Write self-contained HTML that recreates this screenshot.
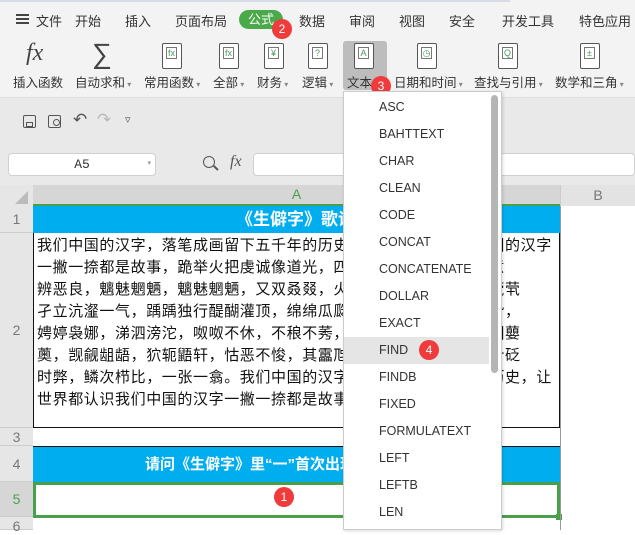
<!DOCTYPE html><html><head><meta charset="utf-8"><style>
*{margin:0;padding:0;box-sizing:border-box}
body{width:635px;height:530px;overflow:hidden;background:#fff;font-family:"Liberation Sans","Noto Sans CJK SC",sans-serif;position:relative;color:#333}
.a{position:absolute}
.tab{position:absolute;top:11px;font-size:13px;color:#333}
.lbl{position:absolute;top:72px;font-size:12.5px;color:#333;white-space:nowrap}
.ic{position:absolute;top:43px;width:20px;height:26px;border:1.5px solid #555;border-radius:2px;background:#fff}
.ic i{position:absolute;left:3px;top:3px;width:11px;height:12px;border:1px solid #777;font-style:normal;font-size:9px;color:#4a9a5a;text-align:center;line-height:11px}
.badge{position:absolute;width:20px;height:20px;border-radius:50%;background:#ef3b3b;color:#fff;font-size:12px;text-align:center;line-height:20px}
.rh{position:absolute;left:0;width:33px;background:#e6e6e6;border-bottom:1px solid #ccc;color:#777;font-size:14px;text-align:center}
.ln{white-space:nowrap;overflow:hidden;height:22px;line-height:22px;font-size:15px;color:#111;letter-spacing:0.6px}
.dd div{height:27px;line-height:27px;padding-left:35px;font-size:12.5px;color:#333}
</style></head><body>
<div class="a" style="left:0;top:0;width:635px;height:97px;background:#f3f3f3"></div>
<div class="a" style="left:0;top:0;width:510px;height:2px;background:#d8dbe6"></div>
<div class="a" style="left:16px;top:14px;width:13px;height:2px;background:#444;box-shadow:0 4px #444,0 8px #444"></div>
<div class="tab" style="left:36px">文件</div>
<div class="tab" style="left:75px">开始</div>
<div class="tab" style="left:125px">插入</div>
<div class="tab" style="left:175px">页面布局</div>
<div class="a" style="left:239px;top:10px;width:44px;height:19px;border-radius:10px;background:#4aaa4a;color:#fff;font-size:13px;text-align:center;line-height:19px">公式</div>
<div class="badge" style="left:272px;top:19px">2</div>
<div class="tab" style="left:299px">数据</div>
<div class="tab" style="left:349px">审阅</div>
<div class="tab" style="left:399px">视图</div>
<div class="tab" style="left:449px">安全</div>
<div class="tab" style="left:502px">开发工具</div>
<div class="tab" style="left:579px">特色应用</div>
<div class="a" style="left:26px;top:40px;font:italic 24px 'Liberation Serif',serif;color:#444">fx</div>
<div class="a" style="left:92px;top:38px;font-size:28px;color:#444">∑</div>
<div class="a" style="left:343px;top:41px;width:44px;height:49px;background:#bdbdbd;border-radius:3px"></div>
<div class="ic" style="left:162px"><i>fx</i></div>
<div class="ic" style="left:219px"><i>fx</i></div>
<div class="ic" style="left:264px"><i>¥</i></div>
<div class="ic" style="left:308px"><i>?</i></div>
<div class="ic" style="left:354px"><i>A</i></div>
<div class="ic" style="left:417px"><i>◷</i></div>
<div class="ic" style="left:498px"><i>Q</i></div>
<div class="ic" style="left:580px"><i>±</i></div>
<div class="lbl" style="left:13px">插入函数</div>
<div class="lbl" style="left:75px">自动求和<span style="font-size:8px;color:#888"> ▾</span></div>
<div class="lbl" style="left:144px">常用函数<span style="font-size:8px;color:#888"> ▾</span></div>
<div class="lbl" style="left:213px">全部<span style="font-size:8px;color:#888"> ▾</span></div>
<div class="lbl" style="left:257px">财务<span style="font-size:8px;color:#888"> ▾</span></div>
<div class="lbl" style="left:302px">逻辑<span style="font-size:8px;color:#888"> ▾</span></div>
<div class="lbl" style="left:347px">文本</div>
<div class="badge" style="left:371px;top:76px">3</div>
<div class="lbl" style="left:394px">日期和时间<span style="font-size:8px;color:#888"> ▾</span></div>
<div class="lbl" style="left:474px">查找与引用<span style="font-size:8px;color:#888"> ▾</span></div>
<div class="lbl" style="left:555px">数学和三角<span style="font-size:8px;color:#888"> ▾</span></div>
<div class="a" style="left:0;top:97px;width:635px;height:88px;background:#e9e9e9;border-top:1px solid #ddd"></div>
<div class="a" style="left:23px;top:115px;width:13px;height:13px;border:1.5px solid #555;border-radius:2px"></div>
<div class="a" style="left:26px;top:122px;width:7px;height:5px;border:1.5px solid #555"></div>
<div class="a" style="left:48px;top:115px;width:13px;height:13px;border:1.5px solid #555;border-radius:2px"></div>
<div class="a" style="left:53px;top:119px;width:7px;height:7px;border:1.5px solid #555;border-radius:50%;background:#e9e9e9"></div>
<div class="a" style="left:73px;top:110px;font-size:17px;color:#555">↶</div>
<div class="a" style="left:97px;top:110px;font-size:17px;color:#bbb">↷</div>
<div class="a" style="left:125px;top:113px;font-size:11px;color:#555">▿</div>
<div class="a" style="left:8px;top:153px;width:148px;height:23px;background:#fff;border:1px solid #d0d0d0;border-radius:4px;font:13px 'Liberation Mono',monospace;text-align:center;line-height:21px">A5<span style="position:absolute;right:4px;font-size:7px;color:#999">▾</span></div>
<div class="a" style="left:203px;top:156px;width:12px;height:12px;border:1.5px solid #555;border-radius:50%"></div>
<div class="a" style="left:213px;top:167px;width:6px;height:1.5px;background:#555;transform:rotate(45deg)"></div>
<div class="a" style="left:230px;top:153px;font:italic 16px 'Liberation Serif',serif;color:#555">fx</div>
<div class="a" style="left:253px;top:153px;width:382px;height:23px;background:#fff;border:1px solid #d0d0d0;border-radius:4px"></div>
<div class="a" style="left:0;top:185px;width:33px;height:21px;background:#e6e6e6"></div>
<div class="a" style="left:15px;top:191px;width:0;height:0;border-left:13px solid transparent;border-bottom:13px solid #bbb"></div>
<div class="a" style="left:33px;top:185px;width:527px;height:21px;background:#d6d6d6;border-bottom:2px solid #4aa04a;color:#4aa04a;font-size:14px;text-align:center;line-height:19px">A</div>
<div class="a" style="left:560px;top:185px;width:75px;height:21px;background:#e3e3e3;border-left:1px solid #ccc;color:#777;font-size:14px;text-align:center;line-height:21px">B</div>
<div class="rh" style="top:206px;height:27px;line-height:27px">1</div>
<div class="rh" style="top:233px;height:195px;line-height:195px">2</div>
<div class="rh" style="top:428px;height:18px;line-height:18px">3</div>
<div class="rh" style="top:446px;height:36px;line-height:36px">4</div>
<div class="rh" style="top:482px;height:35px;line-height:35px;background:#d6d6d6;color:#4aa04a">5</div>
<div class="rh" style="top:517px;height:13px;line-height:18px">6</div>
<div class="a" style="left:33px;top:206px;width:527px;height:27px;background:#00aeef;color:#fff;font-weight:bold;font-size:17px;line-height:27px;padding-left:203px;white-space:nowrap;overflow:hidden">《生僻字》歌词</div>
<div class="a" style="left:33px;top:233px;width:527px;height:195px;border:1px solid #111;border-top:none;padding:2px 0 0 3px">
<div class="ln">我们中国的汉字，落笔成画留下五千年的历史让世界都认识我们中国的汉字</div>
<div class="ln">一撇一捺都是故事，跪举火把虔诚像道光，四方田地里描出象形声意</div>
<div class="ln">辨恶良，魑魅魍魉，魑魅魍魉，又双叒叕，火炎焱燚，兟兟兟兟，茕茕</div>
<div class="ln">孑立沆瀣一气，踽踽独行醍醐灌顶，绵绵瓜瓞奉为圭臬，龙龘犄角旮，</div>
<div class="ln">娉婷袅娜，涕泗滂沱，呶呶不休，不稂不莠，咄嗟蹀躞耄耋饕餮囹圄蘡</div>
<div class="ln">薁，觊觎龃龉，狖轭鼯轩，怙恶不悛，其靁虺虺，腌臜孑孓陟罚，针砭</div>
<div class="ln">时弊，鳞次栉比，一张一翕。我们中国的汉字落笔成画留下五千年历史，让</div>
<div class="ln">世界都认识我们中国的汉字一撇一捺都是故事。</div>
</div>
<div class="a" style="left:33px;top:446px;width:527px;height:36px;background:#00aeef;border-top:1px solid #111;color:#fff;font-weight:bold;font-size:15px;line-height:36px;padding-left:112px;white-space:nowrap;overflow:hidden">请问《生僻字》里“一”首次出现的位置</div>
<div class="a" style="left:33px;top:482px;width:527px;height:36px;border:3px solid #4aa04a"></div>
<div class="a" style="left:556px;top:514px;width:6px;height:6px;background:#4aa04a"></div>
<div class="badge" style="left:274px;top:487px">1</div>
<div class="a" style="left:560px;top:206px;width:75px;height:324px;border-left:1px solid #999"></div>
<div class="a dd" style="left:343px;top:91px;width:159px;height:439px;background:#fff;border:1px solid #ccc;box-shadow:1px 1px 3px rgba(0,0,0,.15);padding-top:2px">
<div>ASC</div><div>BAHTTEXT</div><div>CHAR</div><div>CLEAN</div><div>CODE</div><div>CONCAT</div><div>CONCATENATE</div><div>DOLLAR</div><div>EXACT</div><div style="background:#e5e5e5;margin-right:12px">FIND</div><div>FINDB</div><div>FIXED</div><div>FORMULATEXT</div><div>LEFT</div><div>LEFTB</div><div>LEN</div>
</div>
<div class="a" style="left:491px;top:95px;width:7px;height:278px;background:#b5b5b5;border-radius:4px"></div>
<div class="badge" style="left:419px;top:340px">4</div>
</body></html>
